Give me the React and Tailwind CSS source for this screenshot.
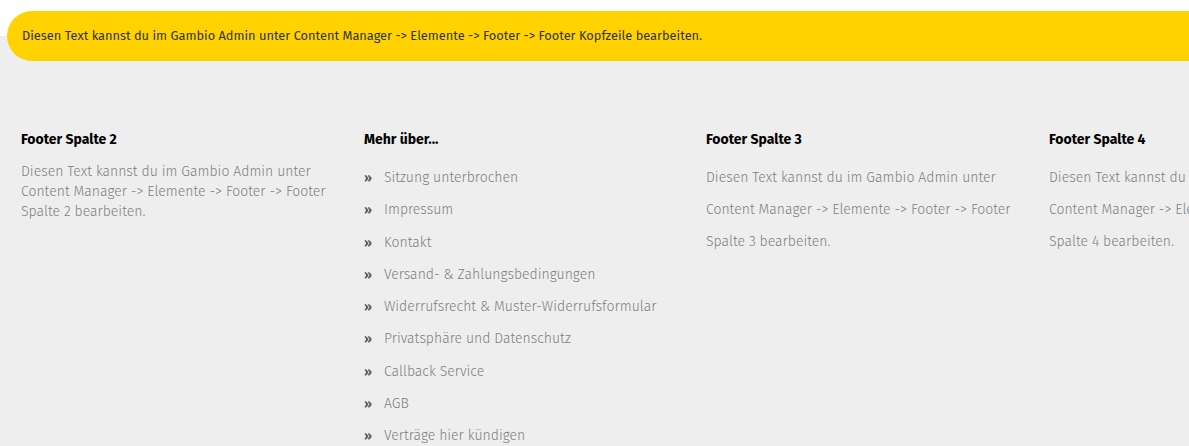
import React from "react";

const font = { fontFamily: '"Fira Sans", Roboto, "Liberation Sans", sans-serif' };

const links = [
  "Sitzung unterbrochen",
  "Impressum",
  "Kontakt",
  "Versand- & Zahlungsbedingungen",
  "Widerrufsrecht & Muster-Widerrufsformular",
  "Privatsphäre und Datenschutz",
  "Callback Service",
  "AGB",
  "Verträge hier kündigen",
];

function Heading({ children }) {
  return (
    <h3 className="text-[14px] leading-[20px] font-bold text-black mb-[12px] whitespace-nowrap">
      {children}
    </h3>
  );
}

export default function App() {
  return (
    <div
      className="w-[1189px] h-[446px] overflow-hidden bg-[linear-gradient(to_bottom,#ffffff_36px,#eeeeee_36px)]"
      style={font}
    >
      <div className="pt-[11px] pl-[7px]">
        <div className="h-[50px] rounded-l-[25px] bg-[#ffd200] flex items-center pl-[15px] text-[12.8px] text-[#333333] whitespace-nowrap">
          Diesen Text kannst du im Gambio Admin unter Content Manager -&gt; Elemente -&gt; Footer -&gt; Footer Kopfzeile bearbeiten.
        </div>
      </div>
      <div className="grid grid-cols-[343px_342px_343px_343px] pl-[21px] pt-[69px]">
        <div className="pr-[28px]">
          <Heading>Footer Spalte 2</Heading>
          <p className="text-[14px] leading-[20px] font-light text-[#7f7f7f]">
            Diesen Text kannst du im Gambio Admin unter Content Manager -&gt; Elemente -&gt; Footer -&gt; Footer Spalte 2 bearbeiten.
          </p>
        </div>
        <div className="pr-[28px]">
          <Heading>Mehr über...</Heading>
          <ul>
            {links.map((l) => (
              <li key={l} className="flex items-center text-[14px] leading-[32.25px] font-light text-[#7f7f7f] whitespace-nowrap">
                <span className="w-[20px] text-[#555555] font-semibold text-[13px]">»</span>
                <span>{l}</span>
              </li>
            ))}
          </ul>
        </div>
        <div className="pr-[28px]">
          <Heading>Footer Spalte 3</Heading>
          <p className="text-[14px] leading-[32px] font-light text-[#7f7f7f]">
            Diesen Text kannst du im Gambio Admin unter Content Manager -&gt; Elemente -&gt; Footer -&gt; Footer Spalte 3 bearbeiten.
          </p>
        </div>
        <div className="pr-[28px]">
          <Heading>Footer Spalte 4</Heading>
          <p className="text-[14px] leading-[32px] font-light text-[#7f7f7f]">
            Diesen Text kannst du im Gambio Admin unter Content Manager -&gt; Elemente -&gt; Footer -&gt; Footer Spalte 4 bearbeiten.
          </p>
        </div>
      </div>
    </div>
  );
}
